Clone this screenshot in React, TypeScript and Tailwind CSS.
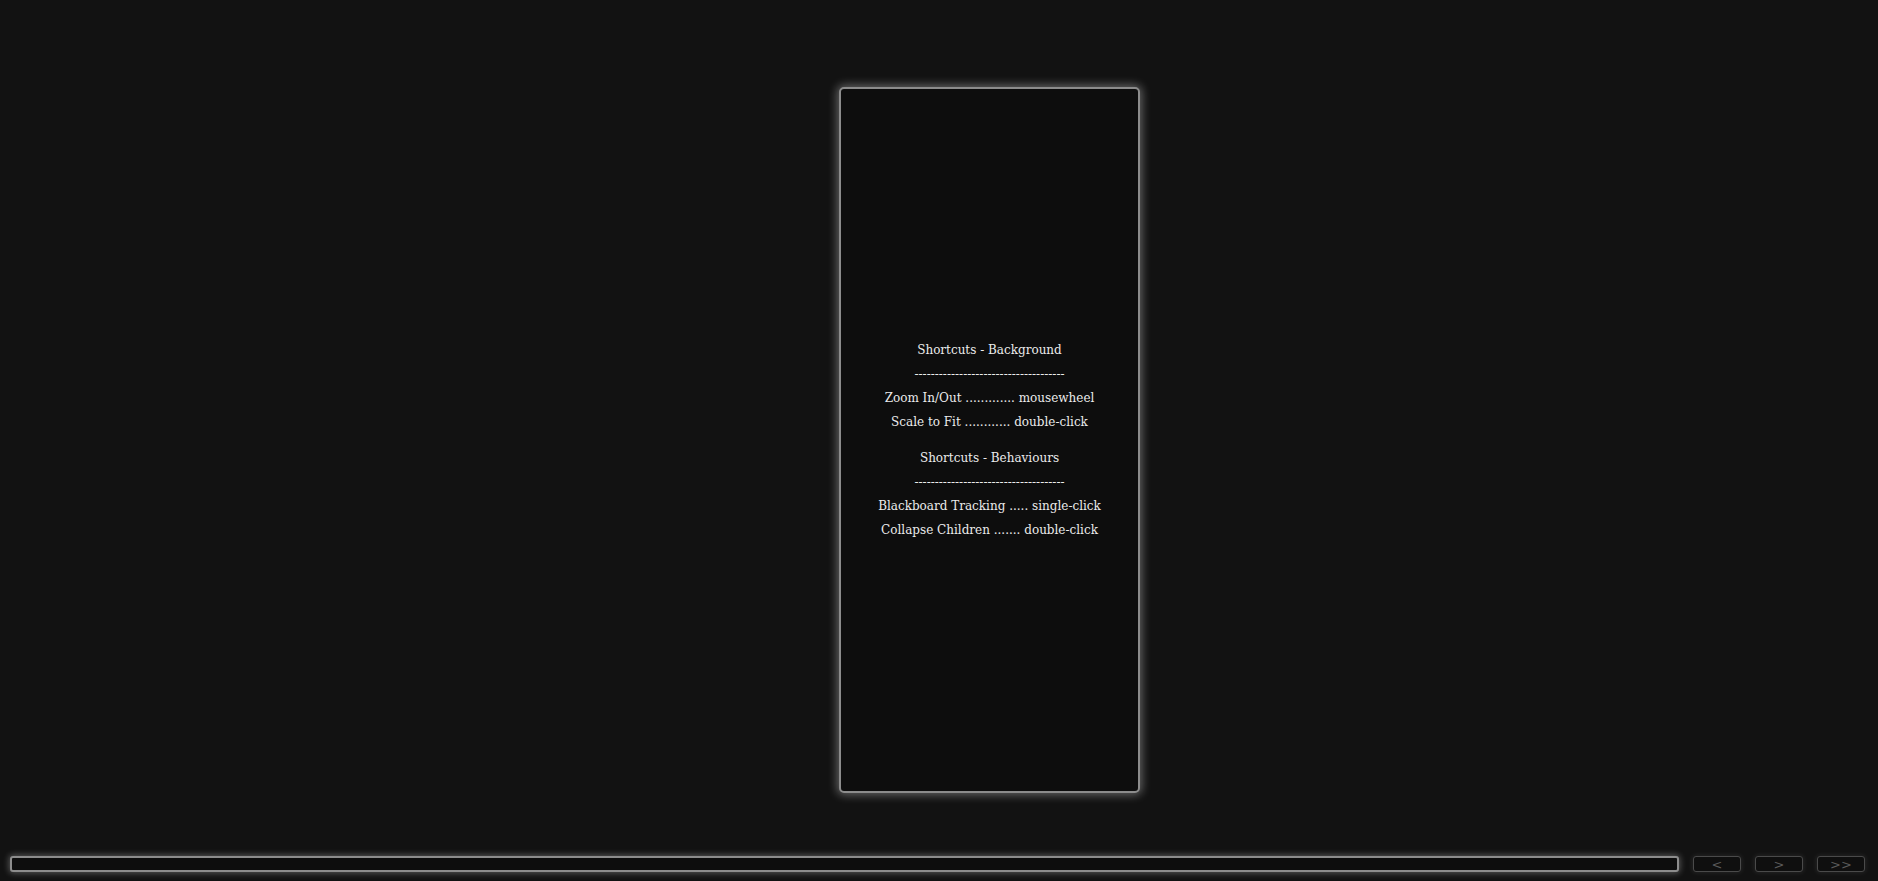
const shortcuts = [
  {
    title: "Shortcuts - Background",
    lines: ["Zoom In/Out ............. mousewheel", "Scale to Fit ............ double-click"],
  },
  {
    title: "Shortcuts - Behaviours",
    lines: ["Blackboard Tracking ..... single-click", "Collapse Children ....... double-click"],
  },
];

const DASHES = "-------------------------------------";

export default function App() {
  return (
    <div className="flex h-[881px] w-full flex-col bg-[#121212] font-['DejaVu_Serif',serif]">
      <div className="flex h-[856px] pl-[839px] pt-[87px] pb-[63px]">
        <div className="flex w-[301px] flex-col items-center justify-center gap-3 rounded-[5px] border-2 border-[#8c8c8c] bg-[#0d0d0d] shadow-[0_0_10px_2px_rgba(255,255,255,0.35)]">
          {shortcuts.map((block) => (
            <div key={block.title} className="flex flex-col items-center text-[12px] leading-[24px] text-[#ebebeb]">
              <span>{block.title}</span>
              <span>{DASHES}</span>
              {block.lines.map((line) => (
                <span key={line}>{line}</span>
              ))}
            </div>
          ))}
        </div>
      </div>
      <div className="flex h-[25px] items-start gap-[14px] pl-[10px] pr-[13px]">
        <div className="h-[16px] flex-1 rounded-[3px] border-2 border-[#8c8c8c] bg-[#0d0d0d] shadow-[0_0_6px_1px_rgba(255,255,255,0.3)]" />
        {["<", ">", ">>"].map((label) => (
          <button
            key={label}
            className="flex h-[16px] w-[48px] items-center justify-center rounded-[3px] border border-[#4a4a4a] bg-[#0f0f0f] font-['DejaVu_Sans',sans-serif] text-[13px] leading-none text-[#5a5a5a] shadow-[0_0_5px_1px_rgba(255,255,255,0.08)]"
          >
            {label}
          </button>
        ))}
      </div>
    </div>
  );
}
